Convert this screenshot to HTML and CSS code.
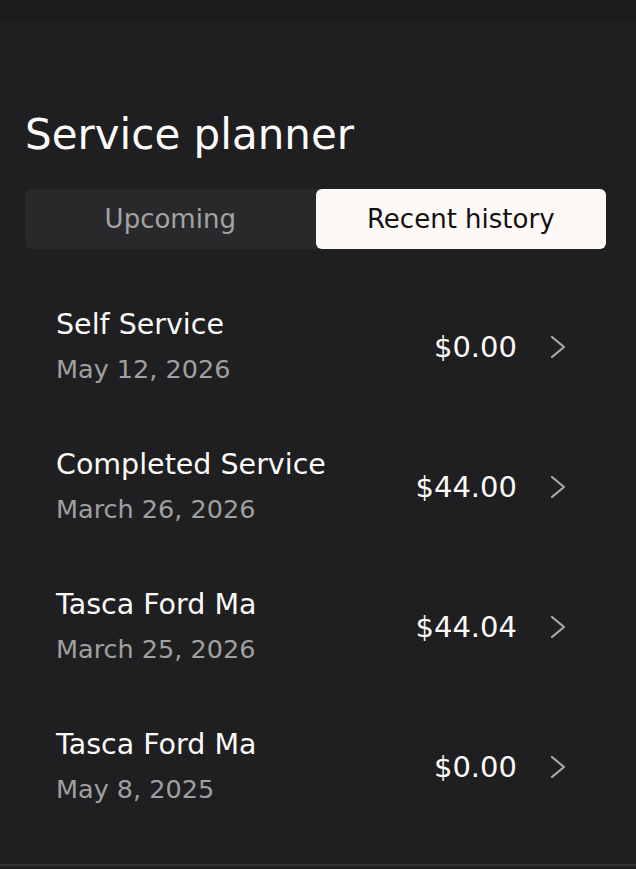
FILE: index.html
```html
<!DOCTYPE html>
<html>
<head>
<meta charset="utf-8">
<link rel="stylesheet" href="styles.css">
</head>
<body>
<div class="topbar"></div>
<main class="page">
  <h1 class="title">Service planner</h1>
  <div class="tabs">
    <div class="tab">Upcoming</div>
    <div class="tab active">Recent history</div>
  </div>
  <ul class="list">
    <li class="row">
      <div class="info"><div class="name">Self Service</div><div class="date">May 12, 2026</div></div>
      <div class="price">$0.00</div>
      <svg class="chev" viewBox="0 0 16 24" width="16" height="24"><path d="M2 2 L14 12 L2 22" fill="none" stroke="#a9a9ab" stroke-width="2.2" stroke-linecap="round" stroke-linejoin="round"/></svg>
    </li>
    <li class="row">
      <div class="info"><div class="name">Completed Service</div><div class="date">March 26, 2026</div></div>
      <div class="price">$44.00</div>
      <svg class="chev" viewBox="0 0 16 24" width="16" height="24"><path d="M2 2 L14 12 L2 22" fill="none" stroke="#a9a9ab" stroke-width="2.2" stroke-linecap="round" stroke-linejoin="round"/></svg>
    </li>
    <li class="row">
      <div class="info"><div class="name">Tasca Ford Ma</div><div class="date">March 25, 2026</div></div>
      <div class="price">$44.04</div>
      <svg class="chev" viewBox="0 0 16 24" width="16" height="24"><path d="M2 2 L14 12 L2 22" fill="none" stroke="#a9a9ab" stroke-width="2.2" stroke-linecap="round" stroke-linejoin="round"/></svg>
    </li>
    <li class="row">
      <div class="info"><div class="name">Tasca Ford Ma</div><div class="date">May 8, 2025</div></div>
      <div class="price">$0.00</div>
      <svg class="chev" viewBox="0 0 16 24" width="16" height="24"><path d="M2 2 L14 12 L2 22" fill="none" stroke="#a9a9ab" stroke-width="2.2" stroke-linecap="round" stroke-linejoin="round"/></svg>
    </li>
  </ul>
  <div class="bottomline"></div>
</main>
</body>
</html>
```
FILE: styles.css
```css
html, body {
  margin: 0;
  padding: 0;
  background: #1f1f21;
  font-family: "DejaVu Sans", "Noto Sans", sans-serif;
  color: #fcfaf8;
}
.topbar {
  height: 20px;
  background: #1c1c1e;
}
.page {
  height: 849px;
  display: flex;
  flex-direction: column;
}
.title {
  margin: 91px 0 0 25px;
  font-size: 42px;
  font-weight: 400;
  line-height: 48px;
}
.tabs {
  margin: 30px 30px 0 25px;
  height: 60px;
  display: grid;
  grid-template-columns: 1fr 1fr;
  background: #29292b;
  border-radius: 6px;
}
.tab {
  display: flex;
  align-items: center;
  justify-content: center;
  font-size: 26px;
  color: #a3a3a5;
}
.tab.active {
  background: #fdf9f6;
  color: #111;
  border-radius: 6px;
}
.list {
  list-style: none;
  margin: 28px 0 0 0;
  padding: 0;
}
.row {
  height: 140px;
  display: flex;
  align-items: center;
  padding: 0 70px 0 56px;
}
.info {
  flex: 1;
}
.name {
  font-size: 28.5px;
  line-height: 44px;
  color: #fcfaf8;
}
.date {
  font-size: 25.5px;
  line-height: 44px;
  color: #a0a0a2;
}
.price {
  font-size: 29px;
  color: #fcfaf8;
  margin-right: 33px;
}
.chev {
  display: block;
}
.bottomline {
  margin-top: auto;
  height: 2px;
  background: #333335;
  margin-bottom: 3px;
}
```
